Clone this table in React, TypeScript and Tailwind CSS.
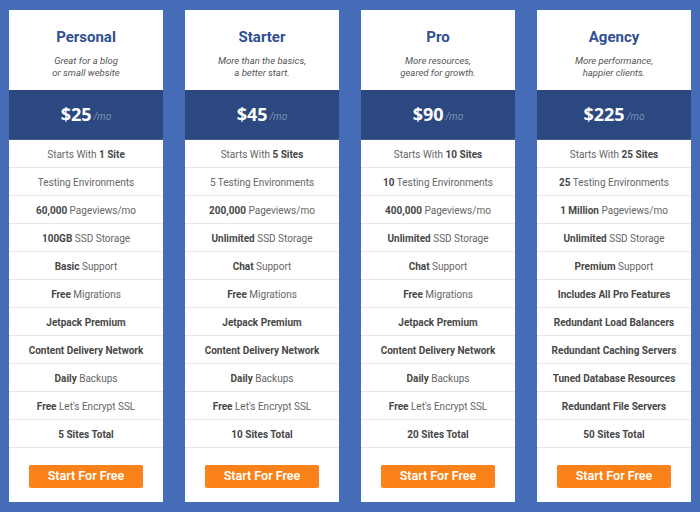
import React from "react";

interface Plan {
  name: string;
  tagline: [string, string];
  price: string;
  features: React.ReactNode[];
}

const B = ({ children }: { children: React.ReactNode }) => (
  <span className="font-bold text-[#474747]">{children}</span>
);

const plans: Plan[] = [
  {
    name: "Personal",
    tagline: ["Great for a blog", "or small website"],
    price: "$25",
    features: [
      <>Starts With <B>1 Site</B></>,
      <>Testing Environments</>,
      <><B>60,000</B> Pageviews/mo</>,
      <><B>100GB</B> SSD Storage</>,
      <><B>Basic</B> Support</>,
      <><B>Free</B> Migrations</>,
      <B>Jetpack Premium</B>,
      <B>Content Delivery Network</B>,
      <><B>Daily</B> Backups</>,
      <><B>Free</B> Let's Encrypt SSL</>,
      <B>5 Sites Total</B>,
    ],
  },
  {
    name: "Starter",
    tagline: ["More than the basics,", "a better start."],
    price: "$45",
    features: [
      <>Starts With <B>5 Sites</B></>,
      <>5 Testing Environments</>,
      <><B>200,000</B> Pageviews/mo</>,
      <><B>Unlimited</B> SSD Storage</>,
      <><B>Chat</B> Support</>,
      <><B>Free</B> Migrations</>,
      <B>Jetpack Premium</B>,
      <B>Content Delivery Network</B>,
      <><B>Daily</B> Backups</>,
      <><B>Free</B> Let's Encrypt SSL</>,
      <B>10 Sites Total</B>,
    ],
  },
  {
    name: "Pro",
    tagline: ["More resources,", "geared for growth."],
    price: "$90",
    features: [
      <>Starts With <B>10 Sites</B></>,
      <><B>10</B> Testing Environments</>,
      <><B>400,000</B> Pageviews/mo</>,
      <><B>Unlimited</B> SSD Storage</>,
      <><B>Chat</B> Support</>,
      <><B>Free</B> Migrations</>,
      <B>Jetpack Premium</B>,
      <B>Content Delivery Network</B>,
      <><B>Daily</B> Backups</>,
      <><B>Free</B> Let's Encrypt SSL</>,
      <B>20 Sites Total</B>,
    ],
  },
  {
    name: "Agency",
    tagline: ["More performance,", "happier clients."],
    price: "$225",
    features: [
      <>Starts With <B>25 Sites</B></>,
      <><B>25</B> Testing Environments</>,
      <><B>1 Million</B> Pageviews/mo</>,
      <><B>Unlimited</B> SSD Storage</>,
      <><B>Premium</B> Support</>,
      <B>Includes All Pro Features</B>,
      <B>Redundant Load Balancers</B>,
      <B>Redundant Caching Servers</B>,
      <B>Tuned Database Resources</B>,
      <B>Redundant File Servers</B>,
      <B>50 Sites Total</B>,
    ],
  },
];

const PlanCard = ({ plan }: { plan: Plan }) => (
  <div className="flex-1 bg-white flex flex-col">
    <div className="h-[80px] flex flex-col items-center pt-[17px]">
      <h2 className="text-[15px] leading-[20px] font-bold text-[#2f4f91] font-['Roboto',sans-serif]">
        {plan.name}
      </h2>
      <p className="mt-[8px] text-[9.5px] leading-[12px] italic text-[#555] text-center font-['Roboto',sans-serif]">
        {plan.tagline[0]}
        <br />
        {plan.tagline[1]}
      </p>
    </div>
    <div className="h-[50px] bg-[#2c4880] border-b border-[#3f5c93] flex items-center justify-center font-['Open_Sans',sans-serif]">
      <span className="text-[18px] font-bold text-white">{plan.price}</span>
      <span className="ml-[2px] mt-[3px] text-[10px] italic text-[#8094bd]">/mo</span>
    </div>
    <ul className="font-['Roboto',sans-serif] text-[10px] text-[#666]">
      {plan.features.map((f, i) => (
        <li
          key={i}
          className="h-[28px] pt-[2px] flex items-center justify-center border-b border-[#e3e8f0] whitespace-nowrap"
        >
          <span>{f}</span>
        </li>
      ))}
    </ul>
    <div className="flex-1 flex items-center justify-center pt-[2px]">
      <button className="w-[114px] h-[23px] bg-[#fa8219] rounded-[2px] text-white text-[12.5px] font-semibold font-['Roboto',sans-serif]">
        Start For Free
      </button>
    </div>
  </div>
);

export default function App() {
  return (
    <div className="w-[700px] h-[512px] bg-[#466cb8] flex gap-[22px] px-[9px] pt-[10px] pb-[10px]">
      {plans.map((p) => (
        <PlanCard key={p.name} plan={p} />
      ))}
    </div>
  );
}
